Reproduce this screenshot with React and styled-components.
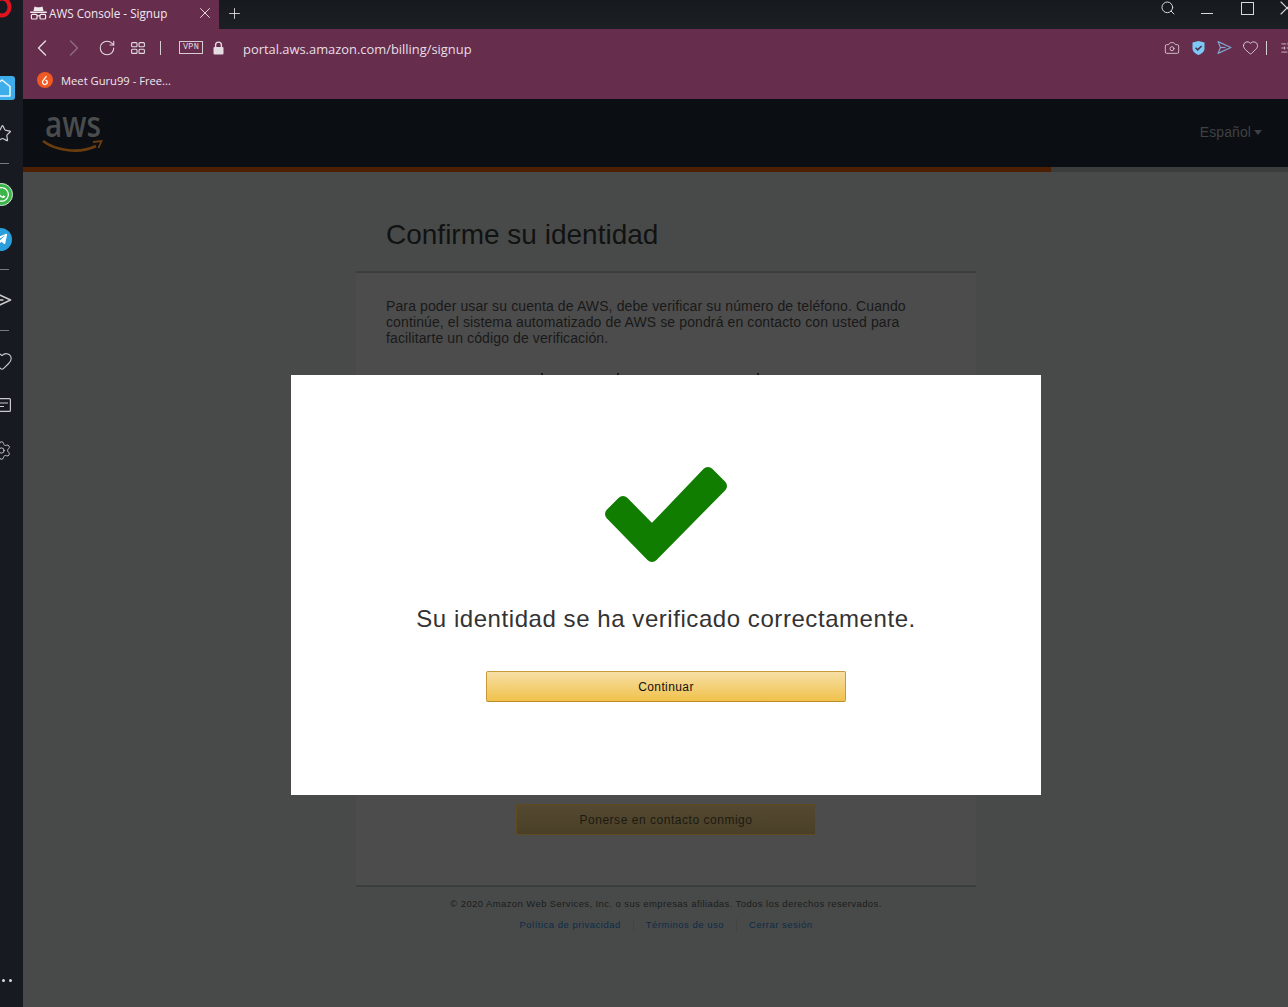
import React from 'react';
import styled, { createGlobalStyle } from 'styled-components';
import { ChevronLeft, ChevronRight, RotateCw, Search, X, Plus, Camera, Heart, Star, Settings, SlidersHorizontal } from 'lucide-react';
import { FaWhatsapp, FaTelegramPlane } from 'react-icons/fa';

const GlobalStyle = createGlobalStyle`
  html, body { margin: 0; padding: 0; height: 100%; background: #484a49; }
  body { font-family: "Liberation Sans", Arial, sans-serif; overflow: hidden; }
`;

const Window = styled.div`
  display: flex;
  width: 1288px;
  height: 1007px;
  overflow: hidden;
`;

/* left opera rail, cut off by the screen edge */
const Rail = styled.aside`
  position: relative;
  flex: 0 0 23px;
  display: flex;
  flex-direction: column;
  background: #171a20;
  overflow: hidden;
`;

const RailLogo = styled.svg`
  display: block;
  margin-left: -9px;
  width: 22px;
  height: 20px;
  margin-bottom: 56px;
`;

const RailSlot = styled.div`
  height: 24px;
  margin-top: ${p => p.$gap || 0}px;
  display: flex;
  align-items: center;
  color: #c9cbce;
  & > svg { flex: none; margin-left: ${p => p.$shift || 0}px; }
`;

const RailHome = styled.div`
  width: 15px;
  height: 24px;
  border-radius: 0 3px 3px 0;
  background: #3eaeea;
  overflow: hidden;
  display: flex;
  align-items: center;
  color: #e8f6fd;
  & > svg { flex: none; margin-left: -8px; }
`;

const RailLine = styled.div`
  width: 9px;
  height: 1px;
  background: #777a7e;
`;

const RailBadge = styled.div`
  flex: none;
  width: 23px;
  height: 23px;
  margin-left: ${p => p.$shift}px;
  border-radius: 50%;
  background: ${p => p.$bg};
  border: ${p => p.$ring ? '1px solid #d8e8da' : 'none'};
  box-sizing: border-box;
  color: #fff;
  display: flex;
  align-items: center;
  justify-content: center;
`;

const RailDots = styled.div`
  margin-top: auto;
  margin-bottom: 25px;
  margin-left: 2px;
  display: flex;
  gap: 4px;
`;

const Dot = styled.span`
  width: 3px;
  height: 3px;
  border-radius: 50%;
  background: #d9dadc;
`;

const Browser = styled.div`
  flex: 1;
  min-width: 0;
  display: flex;
  flex-direction: column;
`;

const TabStrip = styled.div`
  height: 29px;
  display: flex;
  background: linear-gradient(#16191e, #1c1f24);
  color: #e6e6e8;
`;

const Tab = styled.div`
  width: 196px;
  box-sizing: border-box;
  padding: 0 5px 3px 7px;
  display: flex;
  align-items: center;
  background: #662d4d;
  font: 11.7px "Open Sans", sans-serif;
  color: #f1eaee;
  white-space: nowrap;
`;

const TabTitle = styled.span`
  margin-left: 2px;
  flex: 1;
`;

const TabAdd = styled.div`
  width: 30px;
  padding-bottom: 3px;
  display: flex;
  align-items: center;
  justify-content: center;
`;

const WinControls = styled.div`
  margin-left: auto;
  display: flex;
  align-items: flex-start;
  color: #d8d9db;
`;

const WinSearch = styled.div`
  margin-right: 25px;
  height: 15px;
  display: flex;
  align-items: center;
`;

const WinMin = styled.div`
  width: 12px;
  height: 1px;
  margin-top: 13px;
  margin-right: 28px;
  background: #d8d9db;
`;

const WinMax = styled.div`
  width: 11px;
  height: 11px;
  margin-top: 2px;
  margin-right: 21px;
  border: 1px solid #d8d9db;
`;

const WinClose = styled.div`
  width: 24px;
  height: 24px;
  margin-top: -4px;
  margin-right: -11px;
`;

const Toolbar = styled.div`
  height: 37px;
  padding-left: 11px;
  display: flex;
  align-items: center;
  background: #662d4d;
  color: #e4dce1;
`;

const ToolSlot = styled.div`
  flex: none;
  width: ${p => p.$w || 16}px;
  margin-right: ${p => p.$mr || 0}px;
  opacity: ${p => p.$dim ? 0.35 : 1};
  display: flex;
  align-items: center;
  justify-content: center;
  & > svg { flex: none; }
`;

const ToolSep = styled.div`
  flex: none;
  width: 1px;
  height: 14px;
  background: #d6cdd3;
  margin-right: ${p => p.$mr || 0}px;
`;

const VpnTag = styled.div`
  flex: none;
  width: 24px;
  height: 13px;
  margin-right: 9px;
  box-sizing: border-box;
  border: 1px solid #d6cdd3;
  font: 8.5px/11px "Liberation Mono", monospace;
  letter-spacing: 0.3px;
  text-align: center;
  color: #e2dae0;
`;

const UrlText = styled.div`
  margin: 2px 0 0 19px;
  font: 12.9px "Open Sans", sans-serif;
  color: #e6dfe4;
  white-space: nowrap;
`;

const ToolRight = styled.div`
  margin-left: auto;
  display: flex;
  align-items: center;
  margin-right: -7px;
`;

const BookmarkBar = styled.div`
  height: 33px;
  padding: 0 0 5px 14px;
  box-sizing: border-box;
  display: flex;
  align-items: center;
  background: #662d4d;
  color: #efe8ec;
  font: 11.2px "Open Sans", sans-serif;
`;

const Favicon = styled.svg`
  flex: none;
  width: 16px;
  height: 16px;
  margin-right: 8px;
`;

const Page = styled.main`
  position: relative;
  flex: 1;
  display: flex;
  flex-direction: column;
  background: #484a49;
`;

const SiteHeader = styled.header`
  height: 68px;
  flex: none;
  display: flex;
  align-items: center;
  justify-content: space-between;
  padding: 0 26px 2px 19px;
  box-sizing: border-box;
  background: #0b0e13;
`;

const LangPick = styled.div`
  display: flex;
  align-items: center;
  gap: 3px;
  font: 14px "Liberation Sans", sans-serif;
  letter-spacing: 0.1px;
  color: #3f4144;
`;

const Caret = styled.span`
  width: 0;
  height: 0;
  margin-top: 1px;
  border: 4.5px solid transparent;
  border-top: 5px solid #3f4144;
  border-bottom: none;
`;

const Progress = styled.div`
  height: 5px;
  flex: none;
  background: #3b3d3c;
`;

const ProgressFill = styled.div`
  height: 100%;
  width: 1028px;
  background: #4d2003;
`;

const Column = styled.div`
  width: 620px;
  margin-left: 333px;
`;

const Title = styled.h1`
  margin: 0;
  height: 99px;
  box-sizing: border-box;
  padding: 46px 30px 0;
  font: normal 28px/34px "Liberation Sans", sans-serif;
  color: #111212;
`;

const Card = styled.section`
  height: 616px;
  box-sizing: border-box;
  padding: 25px 30px 0;
  display: flex;
  flex-direction: column;
  background: #4c4c4c;
  border-top: 2px solid #3c3d3d;
  border-bottom: 2px solid #3c3d3d;
`;

const Intro = styled.p`
  margin: 0;
  font: 14px/16px "Liberation Sans", sans-serif;
  letter-spacing: 0.115px;
  color: #191919;
`;

/* tops of the line that sits behind the modal */
const HiddenLine = styled.div`
  height: 2px;
  margin-top: 27px;
  display: flex;
`;

const HiddenTip = styled.span`
  width: 2px;
  height: 2px;
  margin-left: ${p => p.$at}px;
  background: #1c1c1c;
`;

const ContactButton = styled.div`
  align-self: center;
  width: 300px;
  height: 31px;
  margin-top: 429px;
  box-sizing: border-box;
  border: 1px solid #5e4c20;
  border-radius: 2px;
  background: linear-gradient(#544930, #4a4028);
  font: 12px/30px "Liberation Sans", sans-serif;
  letter-spacing: 0.53px;
  text-align: center;
  color: #1d1a12;
`;

const Footer = styled.footer`
  margin-top: 11px;
  text-align: center;
  font: 9.5px "Liberation Sans", sans-serif;
  letter-spacing: 0.4px;
  color: #1b1c1c;
`;

const FooterLinks = styled.div`
  margin-top: 9px;
  display: flex;
  justify-content: center;
  letter-spacing: 0.5px;
  color: #0c2a47;
`;

const FooterLink = styled.span`
  padding: 0 12px;
  line-height: 14px;
  & + & { border-left: 1px solid #434545; }
`;

const Modal = styled.div`
  position: absolute;
  left: 268px;
  top: 276px;
  width: 750px;
  height: 420px;
  box-sizing: border-box;
  padding-top: 92px;
  display: flex;
  flex-direction: column;
  align-items: center;
  background: #fff;
`;

const Check = styled.svg`
  display: block;
  width: 122px;
  height: 95px;
  overflow: visible;
`;

const ModalText = styled.div`
  margin-top: 43px;
  font: 24px/28px "Liberation Sans", sans-serif;
  letter-spacing: 0.56px;
  color: #333;
  white-space: nowrap;
`;

const ContinueButton = styled.div`
  width: 360px;
  height: 31px;
  margin-top: 38px;
  box-sizing: border-box;
  border: 1px solid #c89a3a;
  border-bottom-color: #b78a2a;
  border-radius: 2px;
  background: linear-gradient(#f7dfa5, #f0c14b);
  font: 12px/30px "Liberation Sans", sans-serif;
  letter-spacing: 0.4px;
  text-align: center;
  color: #111;
`;

const FOOT_LINKS = ['Política de privacidad', 'Términos de uso', 'Cerrar sesión'];

function SpyIcon() {
  return (
    <svg width="17" height="14" viewBox="0 0 17 14" fill="#f1eaee">
      <path d="M4.5 0.5 6.8 1.3h3.4L12.5 0.5l1 4.5h-10z" />
      <rect x="0" y="5.4" width="17" height="1.5" rx="0.7" />
      <g fill="none" stroke="#f1eaee" strokeWidth="1.2">
        <rect x="1.4" y="8.4" width="5.6" height="4.6" rx="1" />
        <rect x="10" y="8.4" width="5.6" height="4.6" rx="1" />
        <path d="M7 9.8h3" />
      </g>
    </svg>
  );
}

function GridIcon() {
  return (
    <svg width="14" height="12" viewBox="0 0 14 12" fill="none" stroke="#e4dce1" strokeWidth="1.1">
      <rect x="0.6" y="0.6" width="5.4" height="4.2" rx="1" />
      <rect x="8" y="0.6" width="5.4" height="4.2" rx="1" />
      <rect x="0.6" y="7.2" width="5.4" height="4.2" rx="1" />
      <rect x="8" y="7.2" width="5.4" height="4.2" rx="1" />
    </svg>
  );
}

function LockIcon() {
  return (
    <svg width="11" height="14" viewBox="0 0 11 14">
      <path d="M2.6 6V4a2.9 2.9 0 0 1 5.8 0v2" fill="none" stroke="#e4dce1" strokeWidth="1.4" />
      <rect x="0.5" y="6" width="10" height="7.5" rx="1" fill="#e4dce1" />
    </svg>
  );
}

function SendIcon({ color = 'currentColor', size = 14 }) {
  return (
    <svg width={size} height={size} viewBox="0 0 14 14" fill="none" stroke={color} strokeWidth="1.1" strokeLinejoin="round">
      <path d="M1 1.5 13 7 1 12.5 3.2 7z" />
      <path d="M3.2 7H8" />
    </svg>
  );
}

function ShieldIcon() {
  return (
    <svg width="13" height="14" viewBox="0 0 13 14">
      <path d="M6.5 0 12.5 1.6V7.5C12.5 10.8 9.5 13 6.5 14 3.5 13 .5 10.8.5 7.5V1.6z" fill="#7cc8f8" />
      <path d="M3.6 6.8 5.7 8.9 9.6 5" fill="none" stroke="#4b3350" strokeWidth="1.6" />
    </svg>
  );
}

function AwsLogo() {
  return (
    <svg width="62" height="42" viewBox="0 0 62 42" overflow="visible">
      <text x="3" y="26" fontFamily="Open Sans, sans-serif" fontSize="36" fontWeight="600" fill="#4a4c4e" textLength="56" lengthAdjust="spacingAndGlyphs">aws</text>
      <path d="M1 30C14 40 38 43 54 35" fill="none" stroke="#6a3d0e" strokeWidth="2.6" />
      <path d="M51 31 59.5 30 56.5 37" fill="none" stroke="#6a3d0e" strokeWidth="1.8" />
    </svg>
  );
}

function App() {
  return (
    <>
      <GlobalStyle />
      <Window>
        <Rail>
          <RailLogo viewBox="0 0 22 20">
            <ellipse cx="11" cy="7" rx="7.5" ry="8.5" fill="none" stroke="#e0141e" strokeWidth="4" />
          </RailLogo>
          <RailHome>
            <svg width="20" height="20" viewBox="0 0 20 20" fill="none" stroke="currentColor" strokeWidth="1.5" strokeLinejoin="round">
              <path d="M2 8.5 10 2l8 6.5V18H2z" />
            </svg>
          </RailHome>
          <RailSlot $gap={21} $shift={-7}><Star size={19} strokeWidth={1.5} /></RailSlot>
          <RailSlot $gap={6}><RailLine /></RailSlot>
          <RailSlot $gap={7}>
            <RailBadge $bg="#3bb54a" $shift={-10} $ring><FaWhatsapp size={17} /></RailBadge>
          </RailSlot>
          <RailSlot $gap={21}>
            <RailBadge $bg="#2a9fdc" $shift={-11}><FaTelegramPlane size={14} /></RailBadge>
          </RailSlot>
          <RailSlot $gap={6}><RailLine /></RailSlot>
          <RailSlot $gap={7} $shift={-8}><SendIcon size={20} /></RailSlot>
          <RailSlot $gap={6}><RailLine /></RailSlot>
          <RailSlot $gap={7} $shift={-9}><Heart size={22} strokeWidth={1.2} /></RailSlot>
          <RailSlot $gap={20} $shift={-5}>
            <svg width="16" height="14" viewBox="0 0 16 14" fill="none" stroke="currentColor" strokeWidth="1.2">
              <rect x="0.6" y="0.6" width="14.8" height="12.8" rx="1" />
              <path d="M3 5h10M3 8.5h6" />
            </svg>
          </RailSlot>
          <RailSlot $gap={21} $shift={-9}><Settings size={21} strokeWidth={1.1} /></RailSlot>
          <RailDots><Dot /><Dot /></RailDots>
        </Rail>

        <Browser>
          <TabStrip>
            <Tab>
              <SpyIcon />
              <TabTitle>AWS Console - Signup</TabTitle>
              <X size={18} strokeWidth={1.2} />
            </Tab>
            <TabAdd><Plus size={17} strokeWidth={1.2} /></TabAdd>
            <WinControls>
              <WinSearch><Search size={16} strokeWidth={1.5} /></WinSearch>
              <WinMin />
              <WinMax />
              <WinClose><X size={24} strokeWidth={1.1} /></WinClose>
            </WinControls>
          </TabStrip>

          <Toolbar>
            <ToolSlot $mr={16}><ChevronLeft size={28} strokeWidth={1.2} /></ToolSlot>
            <ToolSlot $mr={17} $dim><ChevronRight size={28} strokeWidth={1.2} /></ToolSlot>
            <ToolSlot $mr={15}><RotateCw size={18} strokeWidth={1.4} /></ToolSlot>
            <ToolSlot $mr={14}><GridIcon /></ToolSlot>
            <ToolSep $mr={18} />
            <VpnTag>VPN</VpnTag>
            <ToolSlot $w={12}><LockIcon /></ToolSlot>
            <UrlText>portal.aws.amazon.com/billing/signup</UrlText>
            <ToolRight>
              <ToolSlot $mr={10}><Camera size={16} strokeWidth={1.2} /></ToolSlot>
              <ToolSlot $mr={10}><ShieldIcon /></ToolSlot>
              <ToolSlot $mr={10}><SendIcon color="#7da7d0" size={15} /></ToolSlot>
              <ToolSlot $mr={8}><Heart size={17} strokeWidth={1.2} /></ToolSlot>
              <ToolSep $mr={12} />
              <ToolSlot><SlidersHorizontal size={14} strokeWidth={1.3} /></ToolSlot>
            </ToolRight>
          </Toolbar>

          <BookmarkBar>
            <Favicon viewBox="0 0 16 16">
              <circle cx="8" cy="8" r="8" fill="#f05a22" />
              <path d="M9.5 4.2 6 8.6a2.4 2.4 0 1 0 4 .4l-1.6-.9" fill="none" stroke="#fff" strokeWidth="1.3" />
            </Favicon>
            Meet Guru99 - Free...
          </BookmarkBar>

          <Page>
            <SiteHeader>
              <AwsLogo />
              <LangPick>Español<Caret /></LangPick>
            </SiteHeader>
            <Progress><ProgressFill /></Progress>
            <Column>
              <Title>Confirme su identidad</Title>
              <Card>
                <Intro>
                  Para poder usar su cuenta de AWS, debe verificar su número de teléfono. Cuando
                  continúe, el sistema automatizado de AWS se pondrá en contacto con usted para
                  facilitarte un código de verificación.
                </Intro>
                <HiddenLine>
                  <HiddenTip $at={155} />
                  <HiddenTip $at={74} />
                  <HiddenTip $at={138} />
                </HiddenLine>
                <ContactButton>Ponerse en contacto conmigo</ContactButton>
              </Card>
              <Footer>
                © 2020 Amazon Web Services, Inc. o sus empresas afiliadas. Todos los derechos reservados.
                <FooterLinks>
                  {FOOT_LINKS.map(link => <FooterLink key={link}>{link}</FooterLink>)}
                </FooterLinks>
              </Footer>
            </Column>
            <Modal>
              <Check viewBox="0 0 122 95">
                <path
                  d="M6 47 18 35 47 64.5 103 6 116 19 47 89Z"
                  fill="#107c00"
                  stroke="#107c00"
                  strokeWidth="12"
                  strokeLinejoin="round"
                />
              </Check>
              <ModalText>Su identidad se ha verificado correctamente.</ModalText>
              <ContinueButton>Continuar</ContinueButton>
            </Modal>
          </Page>
        </Browser>
      </Window>
    </>
  );
}

export default App;
